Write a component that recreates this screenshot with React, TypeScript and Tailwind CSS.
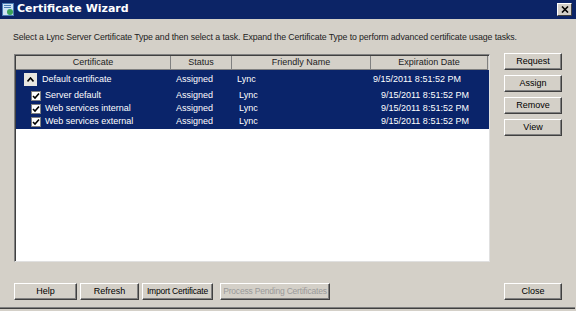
import React from "react";

const Btn = ({ children, className = "", disabled = false }: { children: React.ReactNode; className?: string; disabled?: boolean }) => (
  <div
    className={`flex items-center justify-center h-[17px] whitespace-nowrap overflow-hidden bg-[#d4d0c8] border-t border-l border-t-white border-l-white border-r border-b border-r-[#404040] border-b-[#404040] shadow-[inset_-1px_-1px_0_#808080] ${disabled ? "text-[#9a9a9a]" : "text-black"} ${className}`}
  >
    {children}
  </div>
);

const Check = () => (
  <div className="w-[10px] h-[10px] bg-white border border-[#808080] flex items-center justify-center">
    <svg width="8" height="8" viewBox="0 0 8 8">
      <path d="M1 4 L3 6 L7 1.5" stroke="#000" strokeWidth="1.6" fill="none" />
    </svg>
  </div>
);

const rows = [
  { name: "Server default" },
  { name: "Web services internal" },
  { name: "Web services external" },
];

export default function App() {
  return (
    <div
      className="w-[576px] h-[311px] bg-[#d4d0c8] flex flex-col text-[9px] overflow-hidden"
      style={{ fontFamily: '"Liberation Sans", Arial, sans-serif' }}
    >
      {/* Title bar */}
      <div className="h-[19px] bg-[#0c2466] flex items-center pl-[2px] pr-[4px] shrink-0">
        <svg width="13" height="13" viewBox="0 0 13 13" className="mr-[2px]">
          <rect x="0.5" y="0.5" width="11" height="12" fill="#cfe3f5" stroke="#4a7db5" />
          <rect x="2" y="2" width="7" height="1" fill="#4a7db5" />
          <rect x="2" y="4" width="7" height="1" fill="#4a7db5" />
          <circle cx="8" cy="9" r="3" fill="#3aa35a" />
        </svg>
        <span className="text-white font-bold text-[11px]" style={{ fontFamily: '"DejaVu Sans", sans-serif' }}>
          Certificate Wizard
        </span>
        <div className="ml-auto w-[15px] h-[13px] bg-[#d4d0c8] border-t border-l border-white border-r border-b border-r-[#404040] border-b-[#404040] flex items-center justify-center">
          <svg width="8" height="7" viewBox="0 0 8 7">
            <path d="M1 0.5 L7 6.5 M7 0.5 L1 6.5" stroke="#000" strokeWidth="1.6" />
          </svg>
        </div>
      </div>

      <div className="flex-1 flex flex-col pl-[13px] pr-[14px] pt-[12px]">
        <div className="h-[13px] leading-[13px] text-[#222] text-[8.75px] tracking-[-0.1px] whitespace-nowrap">
          Select a Lync Server Certificate Type and then select a task. Expand the Certificate Type to perform advanced certificate usage tasks.
        </div>

        <div className="flex mt-[10px]">
          {/* Table */}
          <div className="w-[476px] h-[208px] ml-[1px] bg-white border border-t-[#808080] border-l-[#808080] border-r-[#e0e0e0] border-b-[#e0e0e0] shadow-[inset_1px_1px_0_#404040] flex flex-col">
            <div className="flex h-[14px] bg-[#d4d0c8] text-[#222] ml-[1px] mt-[1px] shrink-0">
              <div className="w-[155px] flex items-center justify-center border-r border-r-[#808080] border-b border-b-[#808080]">Certificate</div>
              <div className="w-[61px] flex items-center justify-center border-r border-r-[#808080] border-b border-b-[#808080]">Status</div>
              <div className="w-[139px] flex items-center justify-center border-r border-r-[#808080] border-b border-b-[#808080]">Friendly Name</div>
              <div className="w-[117px] flex items-center justify-center border-r border-r-[#808080] border-b border-b-[#808080]">Expiration Date</div>
            </div>
            <div className="bg-[#0a246a] text-white ml-[1px] flex flex-col pb-[1px]">
              <div className="flex items-center h-[19px]">
                <div className="w-[155px] flex items-center pl-[8px]">
                  <div className="w-[13px] h-[13px] bg-[#e8e6e0] flex items-center justify-center mr-[5px]">
                    <svg width="7" height="5" viewBox="0 0 7 5">
                      <path d="M0.5 4.5 L3.5 1 L6.5 4.5" stroke="#000" strokeWidth="1.6" fill="none" />
                    </svg>
                  </div>
                  <span>Default certificate</span>
                </div>
                <div className="w-[61px] pl-[5px]">Assigned</div>
                <div className="w-[139px] pl-[5px]">Lync</div>
                <div className="w-[117px] pl-[2px]">9/15/2011 8:51:52 PM</div>
              </div>
              {rows.map((r) => (
                <div key={r.name} className="flex items-center h-[13px]">
                  <div className="w-[155px] flex items-center pl-[15px]">
                    <Check />
                    <span className="ml-[4px]">{r.name}</span>
                  </div>
                  <div className="w-[61px] pl-[5px]">Assigned</div>
                  <div className="w-[139px] pl-[7px]">Lync</div>
                  <div className="w-[117px] pl-[10px]">9/15/2011 8:51:52 PM</div>
                </div>
              ))}
            </div>
          </div>

          {/* Right buttons */}
          <div className="ml-auto w-[58px] flex flex-col gap-[5px] -mt-[1px]">
            <Btn>Request</Btn>
            <Btn>Assign</Btn>
            <Btn>Remove</Btn>
            <Btn>View</Btn>
          </div>
        </div>

        <div className="flex mt-[21px] items-center">
          <div className="flex gap-[3px] ml-[1px]">
            <Btn className="w-[63px]">Help</Btn>
            <Btn className="w-[59px]">Refresh</Btn>
            <Btn className="w-[71px] text-[8.5px] tracking-[-0.2px]">Import Certificate</Btn>
            <Btn className="w-[110px] ml-[4px] text-[8.5px] tracking-[-0.2px]" disabled>Process Pending Certificates</Btn>
          </div>
          <Btn className="ml-auto w-[58px]">Close</Btn>
        </div>

        <div className="mt-auto mb-[2px] h-[2px] border-t border-t-[#808080] border-b border-b-[#404040] -mx-[13px]" />
      </div>
    </div>
  );
}
